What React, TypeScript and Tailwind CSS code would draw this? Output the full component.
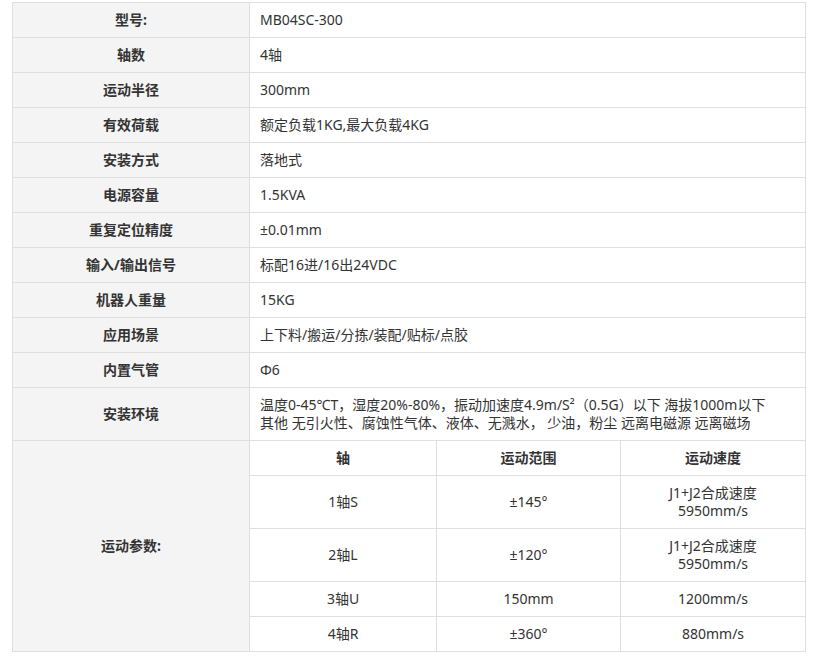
import React from "react"

const specs: [string, React.ReactNode][] = [
  ["型号:", "MB04SC-300"],
  ["轴数", "4轴"],
  ["运动半径", "300mm"],
  ["有效荷载", "额定负载1KG,最大负载4KG"],
  ["安装方式", "落地式"],
  ["电源容量", "1.5KVA"],
  ["重复定位精度", "±0.01mm"],
  ["输入/输出信号", "标配16进/16出24VDC"],
  ["机器人重量", "15KG"],
  ["应用场景", "上下料/搬运/分拣/装配/贴标/点胶"],
  ["内置气管", "Φ6"],
  [
    "安装环境",
    <>
      温度0-45℃T，湿度20%-80%，振动加速度4.9m/S²（0.5G）以下 海拔1000m以下
      <br />
      其他 无引火性、腐蚀性气体、液体、无溅水， 少油，粉尘 远离电磁源 远离磁场
    </>,
  ],
]

const motion: [string, string, React.ReactNode][] = [
  ["1轴S", "±145°", <>J1+J2合成速度<br />5950mm/s</>],
  ["2轴L", "±120°", <>J1+J2合成速度<br />5950mm/s</>],
  ["3轴U", "150mm", "1200mm/s"],
  ["4轴R", "±360°", "880mm/s"],
]

const cell = "border border-[#dfdfdf] px-[10px] py-[8px] leading-[18px]"
const label = `${cell} bg-[#f4f4f4] text-center font-bold`

export default function App() {
  return (
    <div
      className="w-[814px] h-[658px] bg-white text-[14px] text-[#333333]"
      style={{ fontFamily: '"Noto Sans", "Noto Sans CJK SC", sans-serif' }}
    >
      <div className="pl-[12px] pt-[2px]">
        <table className="w-[794px] table-fixed border-collapse">
          <colgroup>
            <col className="w-[237px]" />
            <col className="w-[187px]" />
            <col className="w-[184px]" />
            <col />
          </colgroup>
          <tbody>
            {specs.map(([k, v]) => (
              <tr key={k}>
                <td className={label}>{k}</td>
                <td colSpan={3} className={`${cell} text-left`}>
                  {v}
                </td>
              </tr>
            ))}
            <tr>
              <td rowSpan={5} className={label}>
                运动参数:
              </td>
              <td className={`${cell} text-center font-bold`}>轴</td>
              <td className={`${cell} text-center font-bold`}>运动范围</td>
              <td className={`${cell} text-center font-bold`}>运动速度</td>
            </tr>
            {motion.map(([a, b, c]) => (
              <tr key={a}>
                <td className={`${cell} text-center`}>{a}</td>
                <td className={`${cell} text-center`}>{b}</td>
                <td className={`${cell} text-center`}>{c}</td>
              </tr>
            ))}
          </tbody>
        </table>
      </div>
    </div>
  )
}
